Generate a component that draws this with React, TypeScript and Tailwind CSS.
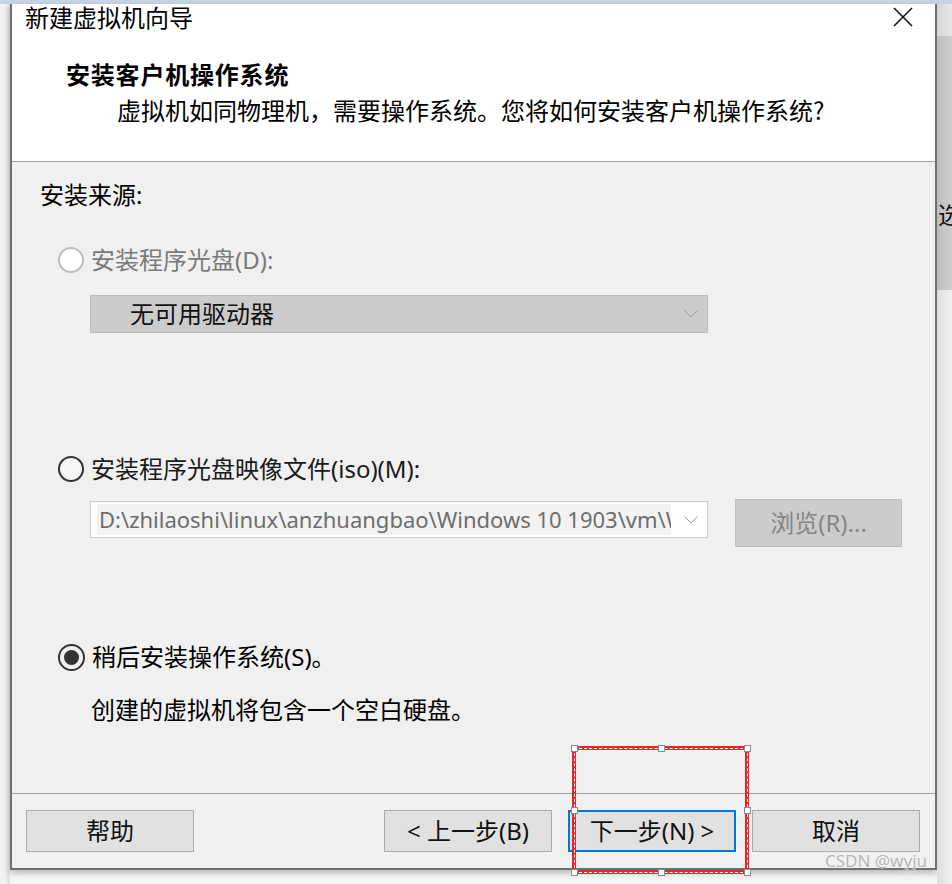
import React from "react";

const Radio = ({ state }: { state: "disabled" | "off" | "on" }) => {
  if (state === "disabled")
    return <div className="w-[26px] h-[26px] rounded-full border-2 border-[#bcbcbc] bg-white shrink-0" />;
  if (state === "off")
    return <div className="w-[26px] h-[26px] rounded-full border-2 border-[#333333] bg-[#f5f5f5] shrink-0" />;
  return (
    <div className="w-[27px] h-[27px] rounded-full border-2 border-[#333333] flex items-center justify-center shrink-0">
      <div className="w-[15px] h-[15px] rounded-full bg-[#333333]" />
    </div>
  );
};

const Chevron = () => (
  <svg width="14" height="8" viewBox="0 0 14 8" className="shrink-0">
    <polyline points="0.5,0.5 7,7 13.5,0.5" fill="none" stroke="#9a9a9a" strokeWidth="1" />
  </svg>
);

const Btn = ({ children, focus }: { children: React.ReactNode; focus?: boolean }) => (
  <div
    className={
      "w-[168px] h-[42px] flex items-center justify-center bg-[#e1e1e1] text-[24px] leading-[30px] text-[#111] " +
      (focus ? "border-2 border-[#0078d7]" : "border border-[#adadad]")
    }
  >
    {children}
  </div>
);

const Handle = ({ x, y }: { x: number; y: number }) => (
  <div
    className="absolute w-[7px] h-[7px] bg-white border border-[#8a8a8a]"
    style={{ left: x - 3, top: y - 3 }}
  />
);

export default function App() {
  return (
    <div className="w-[952px] h-[884px] overflow-hidden relative bg-[#f5f5f5] font-['Noto_Sans','Noto_Sans_CJK_SC',sans-serif] text-black">
      <div className="h-[4px] bg-[#c9d3e3]" />
      <div className="flex">
        <div className="w-[10px] h-[880px] bg-gradient-to-r from-[#eef2f8] via-[#f2f2f2] to-[#dcdcdc]" />
        <div className="w-[927px] h-[866px] border-x-2 border-b-2 border-[#6f6f6f] flex flex-col shadow-[0_3px_6px_rgba(0,0,0,0.25)]">
          {/* header */}
          <div className="h-[157px] bg-white flex flex-col font-['Noto_Sans_CJK_SC',sans-serif]">
            <div className="h-[25px] flex items-center justify-between pl-[13px] pr-[22px]">
              <span className="text-[24px] leading-[25px]">新建虚拟机向导</span>
              <svg width="20" height="20" viewBox="0 0 20 20">
                <line x1="1" y1="1" x2="19" y2="19" stroke="#111" strokeWidth="1.6" />
                <line x1="19" y1="1" x2="1" y2="19" stroke="#111" strokeWidth="1.6" />
              </svg>
            </div>
            <div className="mt-[32px] ml-[54px] h-[25px] text-[24px] leading-[25px] font-bold tracking-[0.8px]">
              安装客户机操作系统
            </div>
            <div className="mt-[11px] ml-[105px] h-[25px] text-[24px] leading-[25px]">
              虚拟机如同物理机，需要操作系统。您将如何安装客户机操作系统?
            </div>
          </div>
          <div className="h-px bg-[#a0a0a0]" />
          {/* body */}
          <div className="h-[631px] bg-[#f0f0f0] flex flex-col pt-[18px] text-[24px]">
            <div className="h-[30px] leading-[30px] ml-[28px]">安装来源:</div>

            <div className="mt-[35px] h-[30px] flex items-center ml-[46px] gap-[7px]">
              <Radio state="disabled" />
              <span className="leading-[30px] text-[#7a7a7a]">安装程序光盘(D):</span>
            </div>
            <div className="mt-[20px] ml-[78px] w-[618px] h-[38px] bg-[#cccccc] border border-[#bcbcbc] flex items-center pl-[39px] pr-[9px]">
              <span className="flex-1 leading-[30px] text-[#111]">无可用驱动器</span>
              <Chevron />
            </div>

            <div className="mt-[121px] h-[30px] flex items-center ml-[46px] gap-[7px]">
              <Radio state="off" />
              <span className="leading-[30px] text-[#1a1a1a]">安装程序光盘映像文件(iso)(M):</span>
            </div>
            <div className="mt-[15px] h-[48px] flex items-start ml-[78px]">
              <div className="mt-[2px] w-[618px] h-[37px] bg-white border border-[#cccccc] flex items-center pl-[6px] pr-[9px]">
                <div className="w-[574px] h-[31px] bg-[#f2f2f2] overflow-hidden whitespace-nowrap pl-[2px] text-[22px] leading-[31px] text-[#6d6d6d]">
                  D:\zhilaoshi\linux\anzhuangbao\Windows 10 1903\vm\Windows 10.vmx
                </div>
                <div className="flex-1" />
                <Chevron />
              </div>
              <div className="ml-[27px] w-[167px] h-[48px] bg-[#cccccc] border border-[#bfbfbf] flex items-center justify-center text-[#858585] leading-[30px]">
                浏览(R)...
              </div>
            </div>

            <div className="mt-[95px] h-[30px] flex items-center ml-[46px] gap-[7px]">
              <Radio state="on" />
              <span className="leading-[30px]">稍后安装操作系统(S)。</span>
            </div>
            <div className="mt-[23px] h-[30px] leading-[30px] ml-[79px]">创建的虚拟机将包含一个空白硬盘。</div>
          </div>
          <div className="h-px bg-[#a0a0a0]" />
          {/* footer */}
          <div className="h-[74px] bg-[#f0f0f0] flex items-start pt-[16px] pl-[14px] pr-[15px]">
            <Btn>帮助</Btn>
            <div className="ml-auto flex gap-[16px]">
              <Btn>&lt; 上一步(B)</Btn>
              <Btn focus>下一步(N) &gt;</Btn>
              <Btn>取消</Btn>
            </div>
          </div>
        </div>
        <div className="w-[15px] flex flex-col overflow-hidden">
          <div className="h-[32px] bg-gradient-to-r from-[#d4d4d4] to-[#e8e8e8]" />
          <div className="h-[254px] bg-gradient-to-r from-[#bdbdbd] to-[#cfcfcf] overflow-hidden pt-[165px] font-['Noto_Sans_CJK_SC',serif]">
            <span className="block w-[40px] text-[24px] leading-[26px] text-[#111] ml-[1px]">选</span>
          </div>
          <div className="flex-1 bg-gradient-to-r from-[#dedede] to-[#f0f0f0]" />
        </div>
      </div>

      {/* red annotation */}
      <div className="absolute left-[572px] top-[746px] w-[177px] h-[128px] border-[4px] border-[#e8232b]">
        <div className="absolute -inset-[2.5px] border border-dashed border-white" />
      </div>
      <Handle x={574} y={748} />
      <Handle x={661} y={748} />
      <Handle x={747} y={748} />
      <Handle x={574} y={810} />
      <Handle x={747} y={810} />
      <Handle x={574} y={872} />
      <Handle x={661} y={872} />
      <Handle x={747} y={872} />

      <div className="absolute left-[825px] top-[850px] text-[17px] leading-[22px] text-[#b5b5b5] [text-shadow:0_0_2px_#ffffff]">
        CSDN @wyju
      </div>
    </div>
  );
}
